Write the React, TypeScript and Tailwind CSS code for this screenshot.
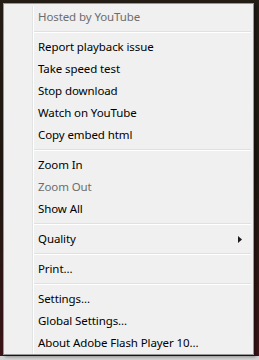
import React from "react";

type Item = { label: string; disabled?: boolean; submenu?: boolean } | "sep";

const items: Item[] = [
  { label: "Hosted by YouTube", disabled: true },
  "sep",
  { label: "Report playback issue" },
  { label: "Take speed test" },
  { label: "Stop download" },
  { label: "Watch on YouTube" },
  { label: "Copy embed html" },
  "sep",
  { label: "Zoom In" },
  { label: "Zoom Out", disabled: true },
  { label: "Show All" },
  "sep",
  { label: "Quality", submenu: true },
  "sep",
  { label: "Print..." },
  "sep",
  { label: "Settings..." },
  { label: "Global Settings..." },
  { label: "About Adobe Flash Player 10..." },
];

const App: React.FC = () => {
  return (
    <div className="w-[259px] h-[360px] overflow-hidden bg-[#221c15] flex flex-col">
      <div className="flex-1 pt-[3px] pl-[3px] bg-gradient-to-b from-[#231d15] via-[#1f1812] to-[#3a1418]">
        {/* Context menu */}
        <div
          className="relative z-10 w-[251px] border border-[#979797] bg-[#f0f0f0] pt-[2px] px-[2px] flex shadow-[2px_2px_3px_rgba(0,0,0,0.35)] text-[11.5px] tracking-[-0.1px] text-black"
          style={{ fontFamily: '"Noto Sans", "Open Sans", sans-serif' }}
        >
          {/* Icon gutter */}
          <div className="w-[27px] border-r border-[#e2e3e3]" />
          <div className="w-px bg-white" />

          <ul className="flex-1">
            {items.map((it, i) =>
              it === "sep" ? (
                <li key={i} className="h-[8px] flex items-center">
                  <div className="w-full h-[2px] border-t border-[#e0e0e0] border-b border-b-white" />
                </li>
              ) : (
                <li
                  key={i}
                  className={`h-[22px] leading-[22px] pl-[4px] pr-[9px] flex items-center justify-between ${
                    it.disabled ? "text-[#6d6d6d]" : "text-black"
                  }`}
                >
                  <span>{it.label}</span>
                  {it.submenu && (
                    <svg width="4" height="7" viewBox="0 0 4 7" className="fill-[#1a1a1a]">
                      <path d="M0 0 L4 3.5 L0 7 Z" />
                    </svg>
                  )}
                </li>
              )
            )}
          </ul>
        </div>
      </div>
      <div className="h-[4px] bg-[#d4d4d4]" />
    </div>
  );
};

export default App;
